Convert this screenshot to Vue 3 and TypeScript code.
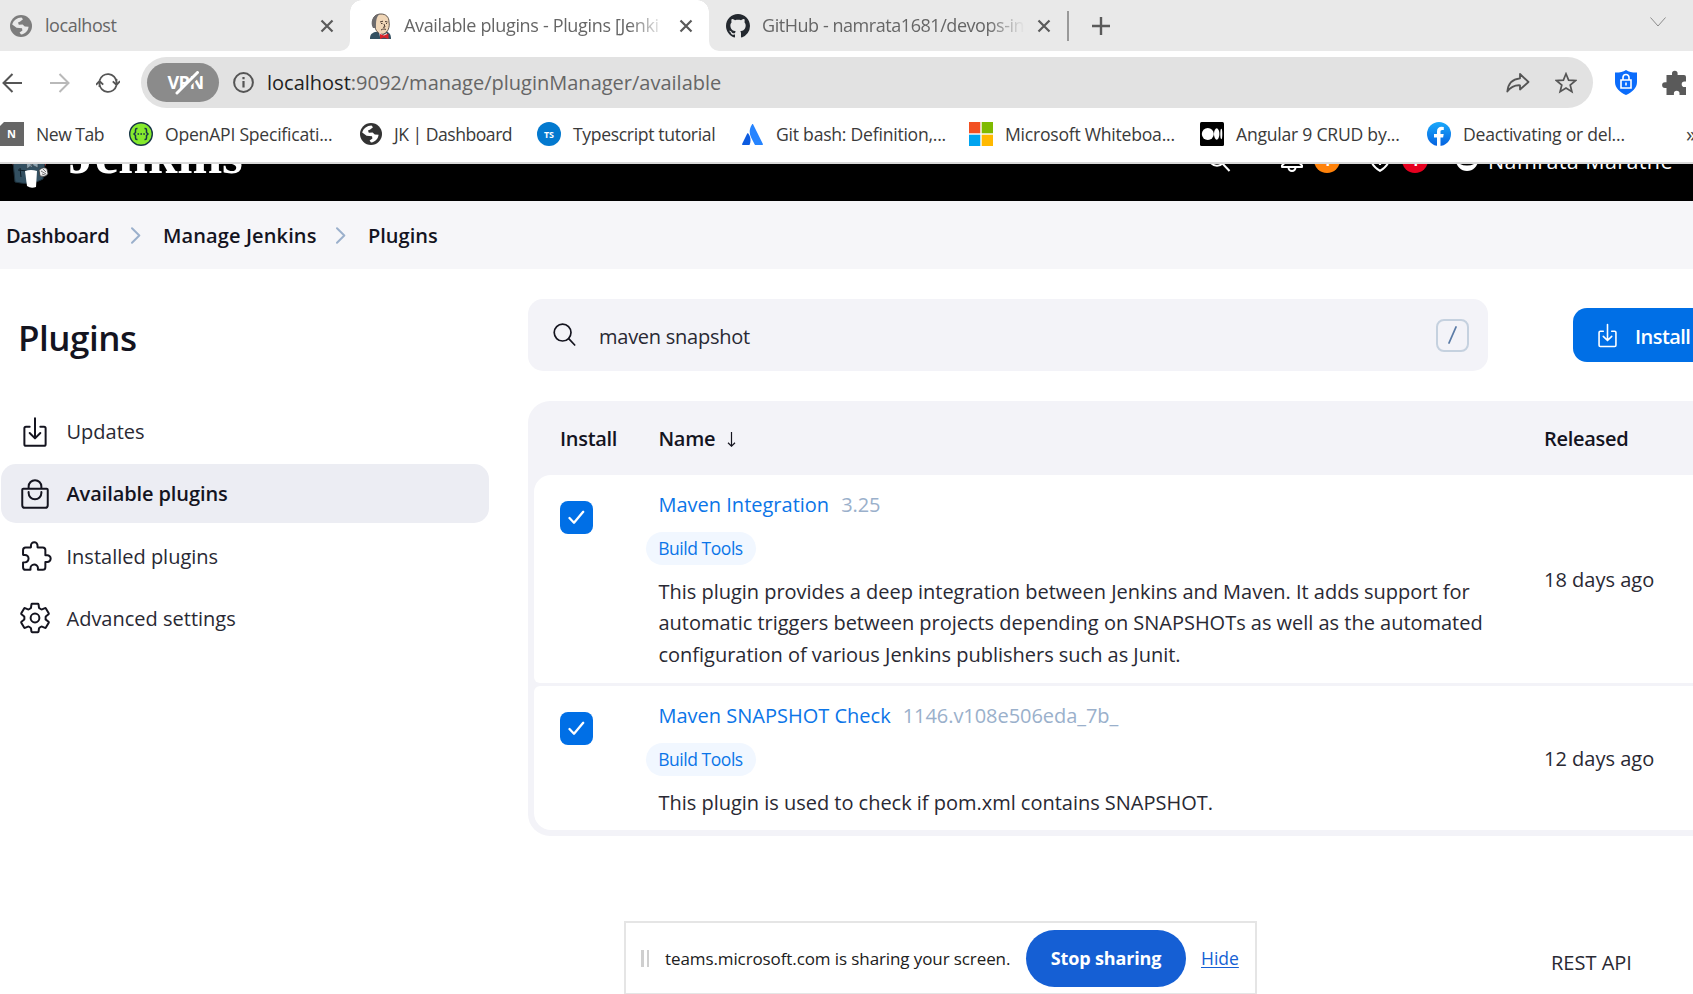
<script setup lang="ts">
interface Bookmark { icon: string; label: string; width: number }
interface Plugin { name: string; version: string; tag: string; lines: string[]; released: string }

const bookmarks: Bookmark[] = [
  { icon: 'new', label: 'New Tab', width: 129 },
  { icon: 'openapi', label: 'OpenAPI Specificati...', width: 230 },
  { icon: 'globe', label: 'JK | Dashboard', width: 178 },
  { icon: 'ts', label: 'Typescript tutorial', width: 204 },
  { icon: 'atlassian', label: 'Git bash: Definition,...', width: 228 },
  { icon: 'microsoft', label: 'Microsoft Whiteboa...', width: 231 },
  { icon: 'medium', label: 'Angular 9 CRUD by...', width: 227 },
  { icon: 'facebook', label: 'Deactivating or del...', width: 259 },
]

const crumbs = ['Dashboard', 'Manage Jenkins', 'Plugins']
const sections = ['Updates', 'Available plugins', 'Installed plugins', 'Advanced settings']

const plugins: Plugin[] = [
  {
    name: 'Maven Integration',
    version: '3.25',
    tag: 'Build Tools',
    lines: [
      'This plugin provides a deep integration between Jenkins and Maven. It adds support for',
      'automatic triggers between projects depending on SNAPSHOTs as well as the automated',
      'configuration of various Jenkins publishers such as Junit.',
    ],
    released: '18 days ago',
  },
  {
    name: 'Maven SNAPSHOT Check',
    version: '1146.v108e506eda_7b_',
    tag: 'Build Tools',
    lines: ['This plugin is used to check if pom.xml contains SNAPSHOT.'],
    released: '12 days ago',
  },
]
</script>

<template>
  <div class="screen">
    <!-- Tab strip -->
    <div class="tabs">
      <div class="tab tab-first">
        <svg class="globe" width="22" height="22" viewBox="0 0 22 22"><circle cx="11" cy="11" r="11" fill="#7d7d7d" /><path d="M2.2 9.5C3.5 5 7 2.6 11.5 2.4L13 4.2 10.2 6.6 8 7.4 8.8 9.8 12.6 9.6 14.8 11.6 18.6 11.8C18.2 15.5 15.5 19 11 19.6L9.6 17.4 12.4 15.4 12 13.2 6.6 12.8Z" fill="#e9e9e9" /></svg>
        <span class="tab-title">localhost</span>
        <svg class="close" width="14" height="14" viewBox="0 0 14 14"><path d="M1.5 1.5l11 11M12.5 1.5l-11 11" /></svg>
      </div>
      <div class="tab tab-active">
        <svg width="24" height="26" viewBox="0 0 24 26">
          <path d="M1 26c0-4 1-5.500 5-7l10-1c4 1 6 3 6 8z" fill="#335061" />
          <path d="M4 10C3 4 7 1 12 1c5 0 8 3 8 8 1 5-1 10-5 12-4 1-8-2-9-7z" fill="#f0d6b7" stroke="#3b3029" stroke-width=".8" />
          <path d="M4 15C1 10 3 2 11 .8 7 4 7 8 7 15z" fill="#6d6b6d" />
          <path d="M11 9l3-.8M16 8.500l2.500.5M12 10.500h1.500M17 10.500h1M15 11l1 3-2 .3M12 17c2-1.500 4-1 5-.5" fill="none" stroke="#4b3a31" stroke-width="1" />
          <path d="M10 19l4 3 4-2v4H11z" fill="#f3dede" />
          <path d="M11 21l4 1.500 4.500-2V26L15 24.500 11 26z" fill="#d8232a" />
        </svg>
        <span class="tab-title fade">Available plugins - Plugins [Jenki</span>
        <svg class="close" width="14" height="14" viewBox="0 0 14 14"><path d="M1.500 1.500l11 11M12.500 1.500l-11 11" /></svg>
      </div>
      <div class="tab tab-last">
        <svg width="24" height="24" viewBox="0 0 16 16"><path fill="#24292f" d="M8 0C3.580 0 0 3.580 0 8c0 3.540 2.290 6.530 5.470 7.590.4.070.55-.17.55-.38 0-.19-.01-.82-.01-1.490-2.010.37-2.530-.49-2.690-.94-.09-.23-.48-.94-.82-1.130-.28-.15-.68-.52-.01-.53.63-.01 1.080.58 1.230.82.72 1.210 1.870.87 2.330.66.07-.52.28-.87.51-1.070-1.780-.2-3.640-.89-3.640-3.950 0-.87.31-1.590.82-2.150-.08-.2-.36-1.020.08-2.120 0 0 .67-.21 2.200.82.64-.18 1.320-.27 2-.27s1.360.09 2 .27c1.530-1.040 2.200-.82 2.200-.82.44 1.100.16 1.920.08 2.120.51.56.82 1.270.82 2.150 0 3.070-1.870 3.750-3.650 3.950.29.25.54.73.54 1.480 0 1.070-.01 1.930-.01 2.200 0 .21.15.46.55.38A8.010 8.010 0 0016 8c0-4.420-3.580-8-8-8z" /></svg>
        <span class="tab-title fade">GitHub - namrata1681/devops-in</span>
        <svg class="close" width="14" height="14" viewBox="0 0 14 14"><path d="M1.500 1.500l11 11M12.500 1.500l-11 11" /></svg>
      </div>
      <span class="tab-divider" />
      <svg class="plus" width="18" height="18" viewBox="0 0 18 18"><path d="M9 0v18M0 9h18" stroke="#5a5a5a" stroke-width="2.400" /></svg>
      <svg class="chevron-down" width="16" height="10" viewBox="0 0 16 10"><path d="M.5.5L8 9 15.500.5" fill="none" stroke="#8b8b8b" /></svg>
    </div>

    <!-- Navigation bar -->
    <div class="toolbar">
      <svg class="back" width="20" height="20" viewBox="0 0 20 20"><path d="M20 10H1.500M10.500 1L1.500 10l9 9" fill="none" stroke="#555" stroke-width="2" /></svg>
      <svg class="forward" width="20" height="20" viewBox="0 0 20 20"><path d="M0 10h18.500M9.500 1l9 9-9 9" fill="none" stroke="#b9b9b9" stroke-width="2" /></svg>
      <svg class="reload" width="24" height="20" viewBox="0 0 24 20"><path d="M3.600 7.500a8.600 8.600 0 0116.900 1.500M20.400 12.500a8.600 8.600 0 01-16.900-1.500M20.500 6v5M3.500 14V9M16.800 8.300l3.700 3.700 3.500-3.800M7.200 11.700L3.500 8 0 11.800" fill="none" stroke="#555" stroke-width="1.800" /></svg>
      <div class="address">
        <span class="vpn">
          <span>VPN</span>
          <svg width="28" height="24" viewBox="0 0 28 24"><path d="M5.500 23.500L26 3" stroke="#8b8b8b" stroke-width="5" /><path d="M4 22L24.500 1.500" stroke="#fff" stroke-width="3" stroke-linecap="round" /></svg>
        </span>
        <svg class="info" width="21" height="21" viewBox="0 0 21 21"><circle cx="10.500" cy="10.500" r="9.400" fill="none" stroke="#555" stroke-width="2" /><path d="M10.500 9v6.500M10.500 5v2.300" stroke="#555" stroke-width="2.200" /></svg>
        <span class="url"><b>localhost</b>:9092/manage/pluginManager/available</span>
        <svg class="share" width="24" height="20" viewBox="0 0 24 20"><path d="M14 1l8.500 8L14 16.500V12.300C8.500 12 5 13.500 1.300 18.500 2 11 6.500 6 14 5.300z" fill="none" stroke="#555" stroke-width="1.800" stroke-linejoin="round" /></svg>
        <svg class="star" width="22" height="22" viewBox="0 0 22 22"><path d="M11 1.800l2.600 6.300 6.900.5-5.300 4.400 1.700 6.700L11 16.100 5.100 19.700l1.700-6.700L1.500 8.600l6.900-.5z" fill="none" stroke="#555" stroke-width="1.700" /></svg>
      </div>
      <svg class="shield" width="22" height="25" viewBox="0 0 22 25"><path d="M11 0c3 2 6.500 2.700 11 2.600v9.400c0 6-5 10.500-11 13C5 22.500 0 18 0 12V2.600C4.500 2.700 8 2 11 0z" fill="#0b6cfb" /><path d="M6 10h10v8H6zM8 10V7.500a3 3 0 016 0V10M11 12.500v3" fill="none" stroke="#fff" stroke-width="1.600" /></svg>
      <svg class="puzzle" width="24" height="25" viewBox="0 0 24 25"><path d="M4.500 5H10V3.500a2.800 2.800 0 015.600 0V5H22q2 0 2 2v4.500h-1.500a2.800 2.800 0 000 5.600H24V25h-6.500v-1.500a2.800 2.800 0 00-5.600 0V25H4.500v-7H3a2.900 2.900 0 010-5.800h1.500z" fill="#5a5a5a" /></svg>
    </div>

    <!-- Bookmarks bar -->
    <div class="bookmarks">
      <div v-for="b in bookmarks" :key="b.label" class="bookmark" :class="b.icon" :style="{ width: b.width + 'px' }">
        <svg v-if="b.icon === 'new'" width="24" height="24" viewBox="0 0 24 24"><path d="M4 0h20v24H0V4z" fill="#666" /><text x="11.500" y="16" class="badge-text" text-anchor="middle" font-size="11">N</text></svg>
        <svg v-else-if="b.icon === 'openapi'" width="24" height="24" viewBox="0 0 24 24"><circle cx="12" cy="12" r="11.300" fill="#85ea2d" stroke="#173647" stroke-width="1.400" /><path d="M8.500 6.500H7.800Q6.500 6.500 6.500 8v2.500L5 12l1.500 1.500V16q0 1.500 1.300 1.500h.7M15.500 6.500h.7q1.300 0 1.300 1.500v2.500L19 12l-1.500 1.500V16q0 1.500-1.300 1.500h-.7" fill="none" stroke="#173647" stroke-width="1.500" /><path d="M8.500 12h7.500" stroke="#173647" stroke-width="1.600" stroke-dasharray="1.600 1.300" /></svg>
        <svg v-else-if="b.icon === 'globe'" width="22" height="22" viewBox="0 0 22 22"><circle cx="11" cy="11" r="11" fill="#333" /><path d="M2.200 9.500C3.500 5 7 2.600 11.500 2.400L13 4.200 10.200 6.600 8 7.400 8.800 9.800 12.600 9.600 14.800 11.600 18.600 11.800C18.200 15.500 15.500 19 11 19.600L9.600 17.400 12.400 15.400 12 13.200 6.600 12.800Z" fill="#fff" /></svg>
        <svg v-else-if="b.icon === 'ts'" width="24" height="24" viewBox="0 0 24 24"><circle cx="12" cy="12" r="12" fill="#0379cf" /><text x="12" y="15.500" class="badge-text" text-anchor="middle" font-size="9">TS</text></svg>
        <svg v-else-if="b.icon === 'atlassian'" width="21" height="21" viewBox="0 0 21 21"><path d="M6.300 9.500c-.4-.5-.9-.4-1.100.1L.1 20c-.2.500 0 1 .6 1h6.800c1.800-3.700 1.200-8.300-1.200-11.500z" fill="#0c5be0" /><path d="M10 .5C7 5 7.200 9.500 9 13.200L12.700 20.400c.2.400.5.600.9.600h6.700c.6 0 .8-.5.6-1L11.200.5c-.3-.6-.9-.6-1.200 0z" fill="#2684ff" /></svg>
        <svg v-else-if="b.icon === 'microsoft'" width="24" height="24" viewBox="0 0 24 24"><path d="M0 0h11.300v11.300H0z" fill="#f25022" /><path d="M12.700 0H24v11.300H12.700z" fill="#7fba00" /><path d="M0 12.700h11.300V24H0z" fill="#00a4ef" /><path d="M12.700 12.700H24V24H12.700z" fill="#ffb900" /></svg>
        <svg v-else-if="b.icon === 'medium'" width="24" height="24" viewBox="0 0 24 24"><rect width="24" height="24" rx="1.500" fill="#000" /><circle cx="7.800" cy="12" r="6" fill="#fff" /><ellipse cx="16.700" cy="12" rx="2.700" ry="5.700" fill="#fff" /><ellipse cx="21.300" cy="12" rx="1" ry="5.200" fill="#fff" /></svg>
        <svg v-else width="24" height="24" viewBox="0 0 24 24"><defs><linearGradient id="fb" x2="0" y2="1"><stop stop-color="#19a9fb" /><stop offset="1" stop-color="#0662e0" /></linearGradient></defs><circle cx="12" cy="12" r="12" fill="url(#fb)" /><path d="M10 24v-8.500H7V12h3V9.500C10 6.300 11.800 4.800 14.500 4.800q1.200 0 2.300.2v3h-1.500c-1.400 0-1.800.8-1.800 1.800V12h3.200l-.6 3.500h-2.600V24z" fill="#fff" /></svg>
        <span>{{ b.label }}</span>
      </div>
      <span class="more">»</span>
    </div>

    <!-- Scrolled page header -->
    <header class="page-header">
      <div class="header-inner">
        <svg class="butler" width="46" height="60" viewBox="0 0 46 60">
          <path d="M1 30q4-6 12-7h20q5 3 5 13l-3 8-5-8L9 44z" fill="#d33833" />
          <path d="M5 34l8-9h18l6 10-2 16q-12 7-28 3z" fill="#335061" stroke="#1c2f3a" />
          <path d="M15 26l8 13 8-12z" fill="#f7f7f7" />
          <path d="M18 33l6 4 6-5v8l-6-3-5 4z" fill="#8da3b0" stroke="#33434d" stroke-width=".8" />
          <path d="M10 42l9 1M12 40l1 9" stroke="#0d1c25" fill="none" />
          <path d="M17 43q6-2 12 0l-1 16q-5 2-9-1z" fill="#fff" />
          <path d="M31 42q5-4 8-1l1 5q-3 4-8 2z" fill="#eee" stroke="#333" stroke-width=".8" />
          <path d="M33 43l5 3M35 41l3 3M34 46l3 1" stroke="#555" stroke-width=".8" />
        </svg>
        <span class="wordmark">Jenkins</span>
        <svg class="h-search" width="24" height="24" viewBox="0 0 24 24"><circle cx="10" cy="9.500" r="8.200" fill="none" stroke="#fff" stroke-width="2" /><path d="M15.500 15.500L22.500 23" stroke="#fff" stroke-width="2" /></svg>
        <svg class="h-bell" width="22" height="26" viewBox="0 0 22 26"><path d="M3.500 17V9.500a7.500 7.500 0 0115 0V17l2.500 2.500v1.500H1v-1.500zM7.500 21.500a3.500 3.500 0 007 0" fill="none" stroke="#fff" stroke-width="2" stroke-linejoin="round" /></svg>
        <span class="count orange">1</span>
        <svg class="h-shield" width="22" height="26" viewBox="0 0 22 26"><path d="M11 1.500c3 2 5.500 2.500 9 2.700v8c0 6-4 9.800-9 12.600-5-2.800-9-6.600-9-12.600v-8C5.500 4 8 3.500 11 1.500z" fill="none" stroke="#fff" stroke-width="2" /><path d="M11 8v6M11 16.500V19" stroke="#fff" stroke-width="2.200" /></svg>
        <span class="count red">1</span>
        <svg class="h-user" width="22" height="22" viewBox="0 0 22 22"><circle cx="11" cy="11" r="11" fill="#fff" /><circle cx="11" cy="7.500" r="3.500" /><path d="M4 15q2-3 7-3t7 3q-3 1.500-7 1.500t-7-1.500z" /></svg>
        <span class="user-name">Namrata Marathe</span>
      </div>
    </header>

    <!-- Breadcrumbs -->
    <nav class="crumbs">
      <template v-for="(c, i) in crumbs" :key="c">
        <svg v-if="i" width="10" height="17" viewBox="0 0 10 17"><path d="M1 1.300l7.300 7.200L1 15.700" fill="none" stroke="#9bb0cc" stroke-width="2" stroke-linecap="round" stroke-linejoin="round" /></svg>
        <span :class="'crumb-' + i">{{ c }}</span>
      </template>
    </nav>

    <main class="body">
      <aside class="side">
        <h1>Plugins</h1>
        <ul>
          <li v-for="(s, i) in sections" :key="s" :class="{ active: i === 1 }">
            <svg width="34" height="34" viewBox="0 0 512 512">
              <path v-if="i === 0" d="M336 176h56a24 24 0 0124 24v240a24 24 0 01-24 24H120a24 24 0 01-24-24V200a24 24 0 0124-24h56M176 272l80 80 80-80M256 48v288" />
              <path v-else-if="i === 1" d="M80 176a16 16 0 00-16 16v232c0 22 18 40 40 40h304c22 0 40-18 40-40V192a16 16 0 00-16-16zM160 176v-32a96 96 0 0196-96h0a96 96 0 0196 96v32M160 224v16a96 96 0 0096 96h0a96 96 0 0096-96v-16" />
              <path v-else-if="i === 2" transform="translate(28 0)" d="M413.660 246.100H386a2 2 0 01-2-2v-77.240A38.860 38.860 0 00345.140 128H267.900a2 2 0 01-2-2V98.340c0-27.140-21.500-49.860-48.640-50.330a49.530 49.530 0 00-50.400 49.510V126a2 2 0 01-2 2H87.620A39.740 39.740 0 0048 167.620V238a2 2 0 002 2h26.910c29.370 0 53.680 25.480 54.090 54.850.42 29.870-23.510 57.150-53.290 57.150H50a2 2 0 00-2 2v70.380A39.740 39.740 0 0087.620 464H158a2 2 0 002-2v-20.930c0-30.280 24.750-56.350 55-57.060 30.100-.7 57 20.310 57 50.280V462a2 2 0 002 2h71.140A38.860 38.860 0 00384 425.140v-78a2 2 0 012-2h28.480c27.630 0 49.520-22.670 49.520-50.400s-23.200-48.640-50.340-48.640z" />
              <g v-else>
                <circle cx="256" cy="256" r="66" />
                <path d="M416.390 256a154.340 154.340 0 01-1.530 20.790l45.210 35.460a10.810 10.810 0 012.450 13.750l-42.770 74a10.810 10.810 0 01-13.140 4.590l-44.900-18.080a16.110 16.110 0 00-15.170 1.750A164.480 164.480 0 01325 400.800a15.940 15.940 0 00-8.820 12.140l-6.730 47.890a11.080 11.080 0 01-10.680 9.170h-85.540a11.110 11.110 0 01-10.690-8.870l-6.720-47.820a16.070 16.070 0 00-9-12.220 155.300 155.300 0 01-21.460-12.570 16 16 0 00-15.110-1.710l-44.890 18.070a10.810 10.810 0 01-13.140-4.580l-42.770-74a10.800 10.800 0 012.450-13.750l38.210-30a16.050 16.050 0 006-14.080c-.36-4.170-.58-8.330-.58-12.500s.21-8.270.58-12.350a16 16 0 00-6.070-13.940l-38.190-30A10.810 10.810 0 0149.480 186l42.770-74a10.810 10.810 0 0113.140-4.590l44.900 18.080a16.110 16.110 0 0015.170-1.750A164.480 164.480 0 01187 111.200a15.940 15.940 0 008.820-12.140l6.730-47.890A11.080 11.080 0 01213.230 42h85.540a11.110 11.110 0 0110.690 8.870l6.720 47.820a16.070 16.070 0 009 12.220 155.300 155.300 0 0121.460 12.570 16 16 0 0015.110 1.710l44.890-18.070a10.810 10.810 0 0113.140 4.580l42.770 74a10.800 10.800 0 01-2.450 13.750l-38.210 30a16.050 16.050 0 00-6.050 14.080c.33 4.140.55 8.300.55 12.470z" />
              </g>
            </svg>
            <span>{{ s }}</span>
          </li>
        </ul>
      </aside>

      <section class="content">
        <div class="actions">
          <div class="search">
            <svg width="24" height="24" viewBox="0 0 24 24"><circle cx="9.600" cy="9.600" r="8.400" fill="none" stroke="#14141f" stroke-width="1.700" /><path d="M15.700 15.700l6 6.300" stroke="#14141f" stroke-width="1.700" stroke-linecap="round" /></svg>
            <span class="query">maven snapshot</span>
            <span class="kbd"><svg width="9" height="18" viewBox="0 0 9 18"><path d="M8 1L1 17" stroke="#5b7ba6" stroke-width="1.800" stroke-linecap="round" /></svg></span>
          </div>
          <button class="install">
            <svg width="27" height="27" viewBox="0 0 512 512"><path d="M336 176h56a24 24 0 0124 24v240a24 24 0 01-24 24H120a24 24 0 01-24-24V200a24 24 0 0124-24h56M176 272l80 80 80-80M256 48v288" /></svg>
            <span>Install</span>
          </button>
        </div>

        <div class="table">
          <div class="row head">
            <span class="col-check">Install</span>
            <span class="col-name">Name<svg width="9" height="15" viewBox="0 0 9 15"><path d="M4.500 0v14M1 10.800l3.500 3.400L8 10.800" fill="none" stroke="#14141f" stroke-width="1.200" /></svg></span>
            <span class="col-date">Released</span>
          </div>
          <div v-for="p in plugins" :key="p.name" class="row item">
            <div class="col-check">
              <span class="checkbox"><svg width="17" height="15" viewBox="0 0 17 15"><path d="M1.500 8l4.500 4.700L15.200 1.800" fill="none" stroke="#fff" stroke-width="2.300" stroke-linecap="round" stroke-linejoin="round" /></svg></span>
            </div>
            <div class="col-name">
              <div class="title"><a>{{ p.name }}</a><span class="version">{{ p.version }}</span></div>
              <span class="tag">{{ p.tag }}</span>
              <p><span v-for="l in p.lines" :key="l">{{ l }}</span></p>
            </div>
            <div class="col-date">{{ p.released }}</div>
          </div>
        </div>
      </section>
    </main>

    <span class="rest-api">REST API</span>

    <div class="sharing">
      <span class="grip"><i /><i /></span>
      <span class="sharing-text">teams.microsoft.com is sharing your screen.</span>
      <button class="stop">Stop sharing</button>
      <a class="hide">Hide</a>
    </div>
  </div>
</template>

<style>
body {
  margin: 0;
  overflow: hidden;
}
</style>

<style scoped>
.screen {
  position: relative;
  width: 1693px;
  height: 994px;
  overflow: hidden;
  background: #fff;
  color: #292933;
  font: 400 20px/27px "Open Sans", "Noto Sans", sans-serif;
}
.screen * { box-sizing: border-box; }
svg { display: block; flex: none; }
button { border: 0; padding: 0; font: inherit; }
span, a { white-space: nowrap; }

.tabs {
  display: flex;
  align-items: center;
  height: 51px;
  background: linear-gradient(#fff, #fff) 340px 0 / 380px 51px no-repeat, #e9e9e9;
}
.tab {
  display: flex;
  align-items: center;
  height: 51px;
  color: #666;
  font-size: 18px;
  letter-spacing: -0.45px;
}
.tab-first {
  width: 350px;
  padding-left: 10px;
  background: #e9e9e9;
  border-bottom-right-radius: 10px;
}
.tab-first .tab-title { margin-left: 13px; width: 275px; }
.tab-active {
  position: relative;
  width: 359px;
  padding-left: 19px;
}
.tab-active::before, .tab-active::after {
  content: "";
  position: absolute;
  top: 0;
  width: 12px;
  height: 12px;
}
.tab-active::before { left: 0; background: radial-gradient(circle at 12px 12px, transparent 11.500px, #e9e9e9 12px); }
.tab-active::after { right: 0; background: radial-gradient(circle at 0 12px, transparent 11.500px, #e9e9e9 12px); }
.tab-active .tab-title { margin-left: 11px; width: 262px; letter-spacing: -0.34px; }
.tab-active .close { margin-left: 13px; }
.tab-last {
  width: 351px;
  padding-left: 17px;
  background: #e9e9e9;
  border-bottom-left-radius: 10px;
}
.tab-last .tab-title { margin-left: 12px; width: 263px; }
.tab-last .close { margin-left: 12px; }
.fade {
  -webkit-mask-image: linear-gradient(90deg, #000 calc(100% - 38px), transparent 100%);
  mask-image: linear-gradient(90deg, #000 calc(100% - 38px), transparent 100%);
}
.close path { stroke: #5a5a5a; stroke-width: 2.2; }
.tab-divider { width: 2px; height: 30px; margin-left: 7px; background: #999; }
.plus { margin-left: 23px; }
.chevron-down { margin: 0 0 8px 540px; }

.toolbar {
  display: flex;
  align-items: center;
  height: 63px;
}
.back { margin-left: 2px; }
.forward { margin-left: 28px; }
.reload { margin-left: 26px; }
.address {
  display: flex;
  align-items: center;
  width: 1452px;
  height: 51px;
  margin-left: 21px;
  padding-left: 6px;
  border-radius: 26px;
  background: #e2e2e2;
}
.vpn {
  display: flex;
  align-items: center;
  justify-content: center;
  width: 72px;
  height: 39px;
  border-radius: 20px;
  background: #8b8b8b;
  color: #fff;
  font-size: 18px;
  font-weight: 700;
  letter-spacing: -0.5px;
}
.vpn svg { margin: 0 -2px 0 -31px; }
.info { margin-left: 14px; }
.url { width: 1225px; margin-left: 13px; color: #666; }
.url b { color: #1f1f1f; font-weight: 400; }
.share { margin-left: 14px; }
.star { margin-left: 25px; }
.shield { margin-left: 22px; }
.puzzle { margin-left: 25px; }

.bookmarks {
  display: flex;
  align-items: center;
  height: 50px;
  padding-bottom: 8px;
  border-bottom: 2px solid #d9d9d9;
  color: #3a3a3a;
  font-size: 17.6px;
  letter-spacing: -0.24px;
}
.bookmark { display: flex; flex: none; align-items: center; }
.bookmark svg { margin-right: 12px; }
.new span { letter-spacing: -0.5px; }
.globe.bookmark { padding-left: 1px; }
.globe.bookmark span { letter-spacing: -0.5px; }
.ts span { letter-spacing: -0.35px; }
.atlassian svg { margin: 0 13px 0 1px; }
.badge-text { fill: #fff; font-family: "Open Sans", sans-serif; font-weight: 700; letter-spacing: 0; }
.more { color: #444; font-size: 21px; line-height: 20px; }

.page-header { height: 37px; overflow: hidden; background: #000; color: #fff; }
.header-inner { display: flex; align-items: center; height: 80px; margin-top: -44px; }
.butler { margin: -4px 0 0 8px; }
.wordmark {
  width: 1139px;
  margin-left: 14px;
  padding-bottom: 8px;
  font: 700 53.300px/60px "Liberation Serif", serif;
}
.h-search { margin: 0; }
.h-bell { margin: -2px 0 0 50px; }
.count {
  width: 26px;
  height: 26px;
  border-radius: 50%;
  font-size: 15px;
  font-weight: 700;
  line-height: 26px;
  text-align: center;
}
.orange { margin-left: 11px; background: #ff820a; }
.red { margin-left: 11px; background: #e6001f; }
.h-shield { margin: -2px 0 0 29px; }
.h-user { margin-left: 28px; }
.user-name { margin: 1px 0 0 10px; font-size: 21.500px; font-weight: 500; letter-spacing: 0.4px; }

.crumbs {
  display: flex;
  align-items: center;
  height: 68px;
  padding-left: 6px;
  background: #f6f6f9;
  color: #14141f;
  font-weight: 600;
}
.crumbs svg { margin: 0 22px; }
.crumb-0 { width: 103px; letter-spacing: -0.3px; }
.crumb-1 { width: 151px; letter-spacing: 0.12px; }

.body { display: flex; align-items: flex-start; }
.side { flex: none; width: 528px; }
h1 { margin: 45px 0 40px 18px; color: #14141f; font-size: 35px; line-height: 48px; font-weight: 600; letter-spacing: -0.5px; }
ul { display: flex; flex-direction: column; gap: 3.300px; margin: 0; padding: 0 0 0 1px; list-style: none; }
li {
  display: flex;
  align-items: center;
  width: 488px;
  height: 59px;
  padding-left: 16.500px;
  border-radius: 15px;
}
li svg { margin-right: 15px; }
li svg path, li svg circle, .install path {
  fill: none;
  stroke: #14141f;
  stroke-width: 30;
  stroke-linecap: round;
  stroke-linejoin: round;
}
.active { background: #ecedf3; color: #14141f; font-weight: 600; letter-spacing: -0.1px; }

.content { flex: none; width: 1165px; padding-top: 30px; }
.actions { display: flex; align-items: center; }
.search {
  display: flex;
  flex: none;
  align-items: center;
  width: 960px;
  height: 72px;
  padding: 0 19px 0 25px;
  border-radius: 15px;
  background: #f3f3f8;
}
.query { flex: 1; margin-left: 22px; padding-top: 2px; letter-spacing: -0.25px; }
.kbd {
  display: flex;
  align-items: center;
  justify-content: center;
  width: 33px;
  height: 33px;
  border: 2px solid #c5d1df;
  border-radius: 8px;
}
.install {
  display: flex;
  align-items: center;
  flex: none;
  width: 180px;
  height: 54px;
  margin-left: 85px;
  padding-left: 21px;
  border-radius: 14px;
  background: #006fe6;
  color: #fff;
  font-weight: 600;
}
.install path { stroke: #fff; }
.install span { margin-left: 14px; padding-top: 2px; letter-spacing: -0.55px; }

.table {
  width: 1190px;
  height: 435px;
  margin-top: 30px;
  padding: 0 6px;
  border-radius: 22px;
  background: #f3f3f8;
}
.row { display: flex; }
.head { align-items: flex-start; height: 74px; padding-top: 24px; color: #14141f; font-weight: 600; letter-spacing: -0.3px; }
.head .col-name { display: flex; align-items: center; }
.head .col-name svg { margin: 2px 0 0 12px; }
.col-check { flex: none; width: 124.500px; padding-left: 26px; }
.col-name { flex: none; width: 885.500px; }
.item { background: #fff; border-radius: 6px; }
.item:nth-child(2) { height: 208px; border-top-left-radius: 17px; }
.item:last-child { height: 144px; margin-top: 3px; border-bottom-left-radius: 17px; }
.item .col-date { align-self: center; padding-top: 1px; }
.checkbox {
  display: flex;
  align-items: center;
  justify-content: center;
  width: 33px;
  height: 33px;
  margin-top: 26px;
  border-radius: 8px;
  background: #006fe6;
}
.title { display: flex; gap: 12px; margin-top: 16px; }
.title a { color: #0b75e8; }
.version { color: #9ab0cb; letter-spacing: -0.05px; }
.tag {
  display: block;
  width: 110px;
  height: 33px;
  margin: 14px 0 0 -13px;
  border-radius: 17px;
  background: #f1f7ff;
  color: #0b75e8;
  font-size: 17.500px;
  line-height: 33px;
  letter-spacing: -0.46px;
  text-align: center;
}
p { display: flex; flex-direction: column; margin: 11px 0 0; line-height: 31.400px; letter-spacing: -0.02px; }

.rest-api { position: absolute; left: 1551px; top: 949px; }

.sharing {
  position: absolute;
  left: 624px;
  top: 921px;
  display: flex;
  align-items: center;
  width: 633px;
  height: 73px;
  border: 2px solid #e5e5e5;
  border-bottom-width: 1px;
  background: #fff;
  color: #202020;
  font-size: 17px;
}
.grip { display: flex; gap: 3px; margin-left: 15px; }
.grip i { width: 2.500px; height: 17px; background: #cfcfcf; }
.sharing-text { width: 346px; margin-left: 16px; letter-spacing: -0.1px; }
.stop {
  width: 160px;
  height: 57px;
  margin-left: 15px;
  border-radius: 29px;
  background: #155fd4;
  color: #fff;
  font-size: 18px;
  font-weight: 700;
  letter-spacing: -0.15px;
}
.hide { margin-left: 15px; color: #155fd4; font-size: 17.500px; text-decoration: underline; text-underline-offset: 2px; }
</style>
